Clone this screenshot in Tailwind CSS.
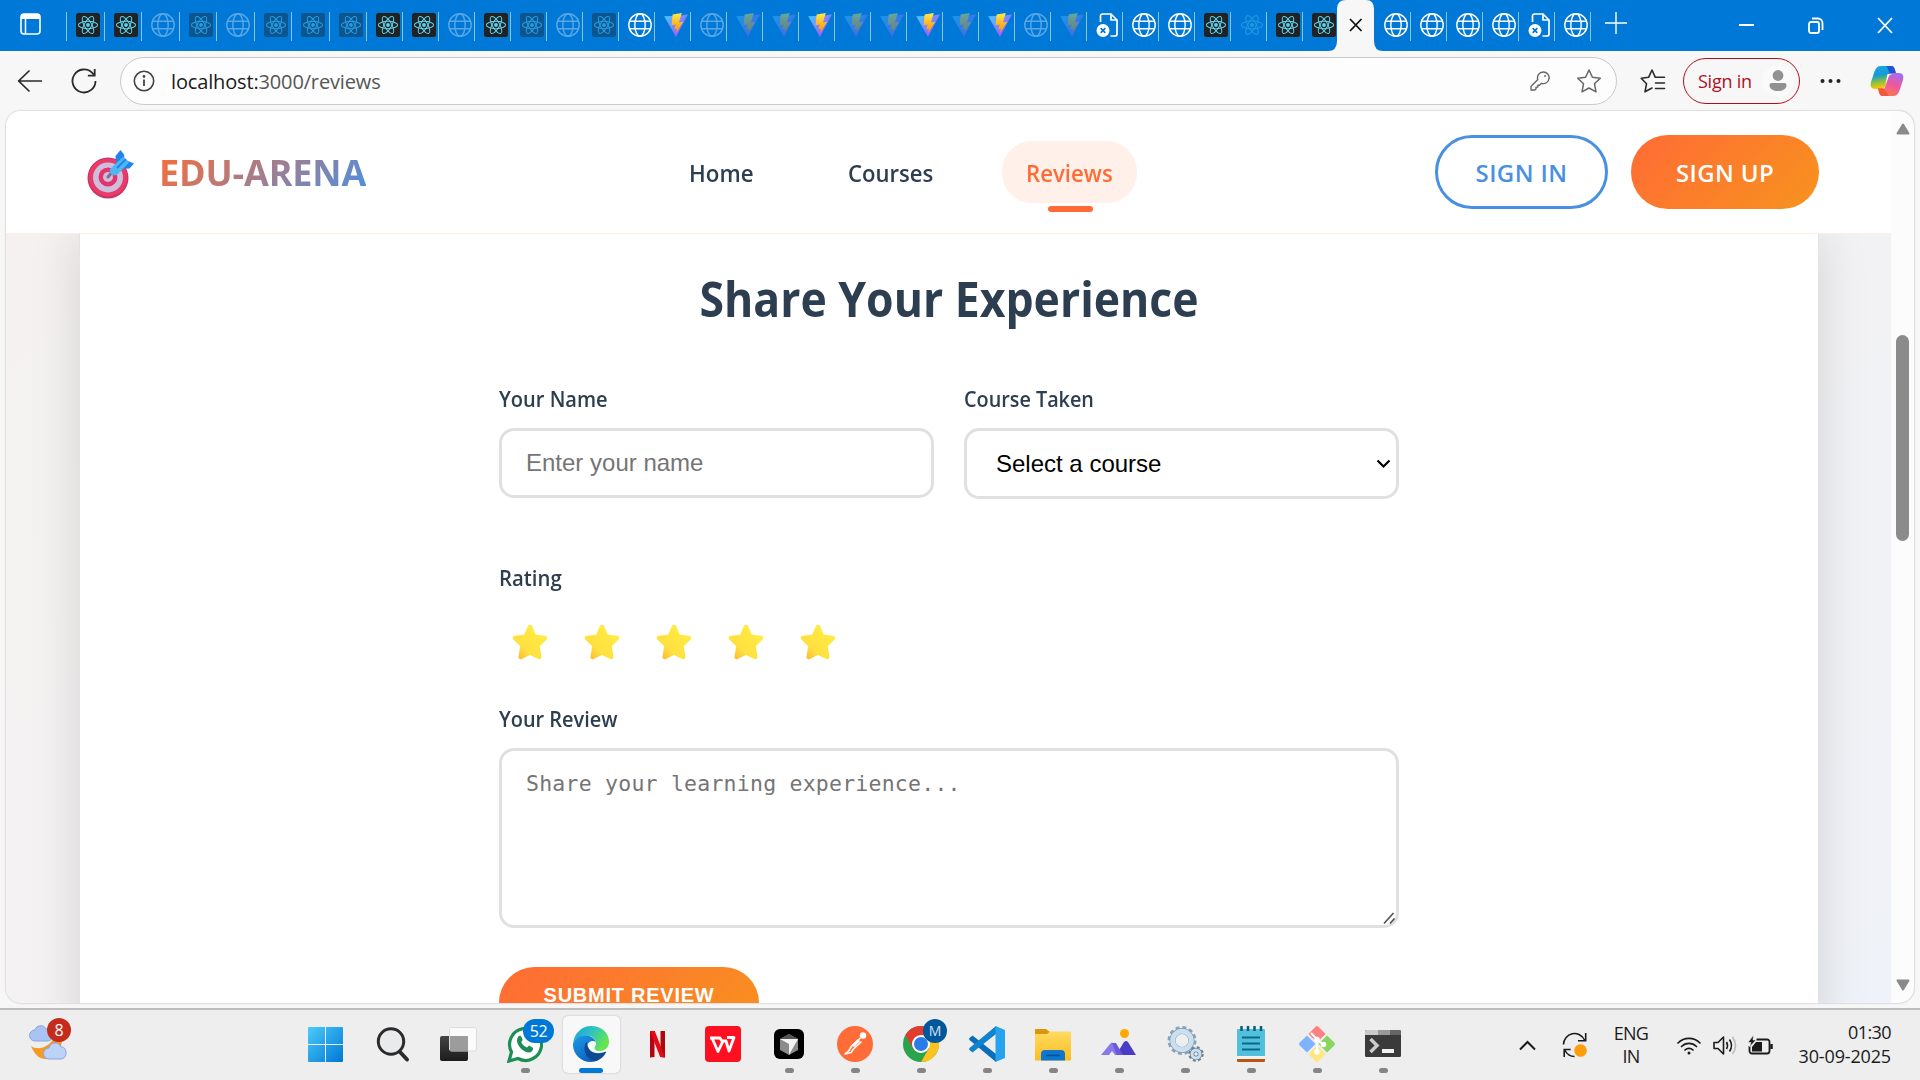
<!DOCTYPE html>
<html lang="en">
<head>
<meta charset="utf-8">
<title>EDU-ARENA – Reviews</title>
<script src="https://cdn.jsdelivr.net/npm/@tailwindcss/browser@4"></script>
</head>
<body class="w-[1920px] h-[1080px] overflow-hidden flex flex-col bg-[#f7f7f7] font-['Open_Sans',sans-serif] text-[#1b1b1b]">

<!-- Shared icon symbols -->
<svg class="absolute w-0 h-0">
  <defs>
    <linearGradient id="viteA" x1="0" y1="0" x2="1" y2="1"><stop offset="0" stop-color="#41d1ff"/><stop offset="1" stop-color="#bd34fe"/></linearGradient>
    <linearGradient id="viteB" x1="0" y1="0" x2="0" y2="1"><stop offset="0" stop-color="#ffea4a"/><stop offset=".6" stop-color="#ffb01a"/><stop offset="1" stop-color="#ff9a00"/></linearGradient>
    <linearGradient id="starG" x1="1" y1="0" x2="0" y2="1"><stop offset="0" stop-color="#ffee45"/><stop offset=".7" stop-color="#ffe03f"/><stop offset="1" stop-color="#fdb63a"/></linearGradient>
  </defs>
  <symbol id="atom" viewBox="0 0 24 24">
    <g fill="none" stroke="#5ed3f0" stroke-width="1.1"><ellipse cx="12" cy="12" rx="10.5" ry="4"/><ellipse cx="12" cy="12" rx="10.5" ry="4" transform="rotate(60 12 12)"/><ellipse cx="12" cy="12" rx="10.5" ry="4" transform="rotate(120 12 12)"/></g>
    <circle cx="12" cy="12" r="2.1" fill="#5ed3f0"/>
  </symbol>
  <symbol id="react" viewBox="0 0 24 24"><rect width="24" height="24" rx="2.5" fill="#222"/><use href="#atom" x="1" y="1" width="22" height="22"/></symbol>
  <symbol id="globe" viewBox="0 0 24 24"><g fill="none" stroke="#fff" stroke-width="1.4"><circle cx="12" cy="12" r="11.2"/><ellipse cx="12" cy="12" rx="5.2" ry="11.2"/><path d="M2 8.2h20M2 15.8h20"/></g></symbol>
  <symbol id="vite" viewBox="0 0 24 24"><path d="M.2 3.2 12 24 24 1.2l-8 1.6Z" fill="url(#viteA)"/><path d="M17.8 0 8.6 1.6 7.6 12.2l4-.8-1.2 5 2.6-.7L12 20.3l7.2-11.5-4.3.8Z" fill="url(#viteB)"/></symbol>
  <symbol id="deadfile" viewBox="0 0 24 24"><path d="M4.500 9V3a2 2 0 0 1 2-2H15l6 6v14a2 2 0 0 1-2 2h-4.500M15 1v6h6" fill="none" stroke="#fff" stroke-width="1.700"/><circle cx="7" cy="17.500" r="6.500" fill="#fff"/><path d="m4.700 15.200 4.600 4.600m0-4.600-4.600 4.600" stroke="#0078d7" stroke-width="1.700"/></symbol>
  <symbol id="star3d" viewBox="0 0 36 36"><path d="M18 3 22.300 12.700 33 14 25.500 21.500 27.300 33 18 28.500 8.700 33 10.500 21.500 3 14 13.700 12.700Z" fill="url(#starG)" stroke="url(#starG)" stroke-width="4.500" stroke-linejoin="round"/></symbol>
</svg>

<!-- Tab strip -->
<div class="h-[51px] shrink-0 bg-[#0078d7] flex items-start">
  <div class="w-[66px] pl-[19.500px] pt-[13px]">
    <svg width="21" height="22" viewBox="0 0 21 22"><rect x="1" y="1" width="19" height="20" rx="3" fill="none" stroke="#fff" stroke-width="1.600"/><path d="M1 1h19v5H1z" fill="#fff"/><path d="M5.500 6v15" stroke="#fff" stroke-width="1.500"/></svg>
  </div>
  <div class="w-px h-[29px] mt-3 bg-[#8cc3ee]"></div>
  <div id="tabs" class="flex items-start"></div>
</div>

<!-- Toolbar -->
<div class="h-[60px] shrink-0 flex items-center">
  <svg class="ml-[17px]" width="26" height="24" viewBox="0 0 26 24" fill="none" stroke="#2a2a2a" stroke-width="1.700"><path d="M25 12H2M12.500 1.500 1.700 12l10.800 10.500"/></svg>
  <svg class="ml-[28px]" width="26" height="26" viewBox="0 0 26 26" fill="none" stroke="#2a2a2a" stroke-width="1.800"><path d="M24.500 13A11.500 11.500 0 1 1 21.500 5.200L23.500 7.500"/><path d="M23.700 1v6.600h-6.800"/></svg>
  <div class="ml-[23px] w-[1497px] h-12 rounded-full border-[1.500px] border-[#c9c9c9] bg-[#fdfdfd] flex items-center">
    <svg class="ml-3 shrink-0" width="22" height="22" viewBox="0 0 22 22" fill="none" stroke="#444" stroke-width="1.600"><circle cx="11" cy="11" r="9.700"/><path d="M11 9.500v6.500" stroke-width="1.800"/><circle cx="11" cy="6.500" r=".6" fill="#444"/></svg>
    <div class="ml-4 w-[1359px] shrink-0 pt-0.5 whitespace-nowrap text-[20px] leading-8 tracking-[-0.15px] text-[#555]"><span class="text-[#1b1b1b]">localhost:</span>3000/reviews</div>
    <svg class="shrink-0" width="20" height="20" viewBox="0 0 20 20" fill="none" stroke="#666" stroke-width="1.400" stroke-linejoin="round"><path d="M13.200 1a5.800 5.800 0 1 1-1.700 11.300L9.500 14.200H7.800v1.900H6v1.800L4.800 19H1v-3.600l6.800-6.800A5.800 5.800 0 0 1 13.200 1Z"/><circle cx="15" cy="5" r=".9" fill="#666" stroke="none"/></svg>
    <svg class="ml-[26px] shrink-0" width="26" height="26" viewBox="0 0 26 26" fill="none" stroke="#666" stroke-width="1.500" stroke-linejoin="round"><path d="m13 2 3.400 7.300 7.900 1-5.800 5.500 1.500 8L13 20l-7 3.800 1.500-8L1.700 10.300l7.900-1Z"/></svg>
  </div>
  <svg class="ml-[23px]" width="26" height="26" viewBox="0 0 26 26" fill="none" stroke="#2a2a2a" stroke-width="1.600" stroke-linejoin="round" stroke-linecap="round"><path d="m12 20-7 3.800 1.500-8-5.300-5.500 7.400-1L12 2l3.300 7.300h9.200M15.500 15h9M15.500 20.500h9"/></svg>
  <div class="ml-[17px] w-[117px] h-[46px] border-[1.500px] border-[#b10e1c] rounded-full flex items-center">
    <span class="ml-[14px] pt-px w-[60px] shrink-0 text-[18px] tracking-[-0.25px] text-[#b10e1c] whitespace-nowrap">Sign in</span>
    <svg class="ml-[4px] shrink-0" width="32" height="34" viewBox="0 0 32 34"><circle cx="16" cy="17" r="16" fill="#fafafa"/><circle cx="16" cy="11.500" r="5.400" fill="#919191"/><path d="M9.500 19h13a2 2 0 0 1 2 2c0 4-4 6-8.500 6s-8.500-2-8.500-6a2 2 0 0 1 2-2Z" fill="#919191"/></svg>
  </div>
  <svg class="ml-5" width="21" height="6" viewBox="0 0 21 6" fill="#222"><circle cx="2.500" cy="3" r="2"/><circle cx="10.500" cy="3" r="2"/><circle cx="18.500" cy="3" r="2"/></svg>
  <svg class="ml-[29px]" width="34" height="32" viewBox="0 0 34 32">
    <defs>
      <linearGradient id="cpA" x1="0" y1="0" x2=".2" y2="1"><stop offset="0" stop-color="#1aa6e8"/><stop offset=".45" stop-color="#159bd6"/><stop offset=".7" stop-color="#7fbf4a"/><stop offset="1" stop-color="#ffc800"/></linearGradient>
      <linearGradient id="cpB" x1=".7" y1="0" x2=".3" y2="1"><stop offset="0" stop-color="#a66bf0"/><stop offset=".5" stop-color="#f0589b"/><stop offset="1" stop-color="#ff7a45"/></linearGradient>
    </defs>
    <path d="M15 1h6c2.500 0 3.300 1.500 4 4l1 3.500h-6L16 20c-1 3-2 4-4.500 4H5C1 24 0 21 1 17L4.500 6.500C5.700 3 7.500 1 11 1Z" fill="url(#cpA)"/>
    <path d="M15 1h6c2.500 0 3.300 1.500 4 4l1 3.500h-6.500L17 1.500Z" fill="#1e55d4"/>
    <path d="M19 31h-6c-2.500 0-3.300-1.500-4-4l-1-3.500h6L18 12c1-3 2-4 4.500-4H29c4 0 5 3 4 7l-3.500 10.500C28.300 29 26.500 31 23 31Z" fill="url(#cpB)"/>
    <path d="M19 31h-6c-2.500 0-3.300-1.500-4-4l-1-3.500h6Z" fill="#f4563a"/>
    <path d="M17.500 9h4.500c-2 .5-3 1.500-3.500 3L14.500 23.500H12c2 0 2.800-1.500 3.300-3Z" fill="#fff"/>
  </svg>
</div>

<!-- Page viewport -->
<div class="h-[897px] shrink-0 px-[6px] pb-[5px]">
  <div class="h-[892px] rounded-[15px] overflow-hidden flex shadow-[0_0_2px_rgba(0,0,0,0.35)] bg-[#fcfcfc]">
    <div class="w-[1885px] flex flex-col bg-[linear-gradient(135deg,#f5f1f1_0%,#f4f2f2_29%,#f2f2f4_71%,#eff2f8_100%)]">
      <!-- Site header -->
      <header class="relative z-10 h-[123px] shrink-0 bg-white border-b border-[#ffede6] flex items-center">
        <svg class="ml-[80px] mt-1" width="50" height="50" viewBox="0 0 50 50">
          <ellipse cx="22" cy="29" rx="20.500" ry="20.500" fill="#c8326b"/><ellipse cx="22" cy="28.500" rx="19.300" ry="19" fill="#e83b68"/>
          <circle cx="22" cy="28.500" r="15" fill="#cdbfdc"/><circle cx="22" cy="28" r="9.500" fill="#e5336b"/><circle cx="22" cy="28" r="5" fill="#cdbfdc"/>
          <path d="m22 28 5-6" stroke="#7d6e94" stroke-width="3" stroke-linecap="round"/>
          <path d="M30 15 29.500 7 34.500 1 38 5.500 38.500 10 42 12 48 14.500 43.500 19.500 35 20Z" fill="#2383ec"/>
          <path d="m24 20 13-12 6 5.500L31 26q-4 1-6-1-2-2.500-1-5Z" fill="#4fb6f2"/><path d="m31 19 9-9" stroke="#2383ec" stroke-width="2"/>
        </svg>
        <div class="ml-[23px] w-[220px] whitespace-nowrap pt-px text-[36px] leading-[50px] font-bold tracking-[-0.15px]"><span class="bg-[linear-gradient(135deg,#ff6b35,#4a90e2)] bg-clip-text text-transparent">EDU-ARENA</span></div>
        <nav class="ml-[310px] flex items-center text-[24px] leading-[64px] font-semibold text-[#2c3e50] whitespace-nowrap">
          <a class="w-[159px] h-[62px]"><span class="inline-block origin-left scale-x-[0.93]">Home</span></a>
          <a class="w-[154px] h-[62px]"><span class="inline-block origin-left scale-x-[0.92]">Courses</span></a>
          <a class="relative w-[135px] h-[62px] rounded-[30px] bg-[#fff0ea] text-[#ff6b35] pl-[24px]"><span class="inline-block origin-left scale-x-[0.925]">Reviews</span><span class="absolute left-[46px] top-[65px] w-[45px] h-[6px] rounded-full bg-[#ff6b35]"></span></a>
        </nav>
        <div class="ml-[298px] flex gap-[23px] text-[24px] font-semibold">
          <a class="w-[173px] h-[74px] pt-0.5 rounded-full border-[3px] border-[#4a90e2] text-[#4a90e2] flex items-center justify-center tracking-[0.4px]">SIGN IN</a>
          <a class="w-[188px] h-[74px] pt-0.5 rounded-full bg-[linear-gradient(135deg,#ff6b35,#f7931e)] text-white flex items-center justify-center tracking-[0.35px]">SIGN UP</a>
        </div>
      </header>
      <!-- Review form card -->
      <main class="flex-1 ml-[73px] w-[1740px] bg-white border-x border-[#e4e2e3] shadow-[0_0_48px_rgba(0,0,0,0.13)] pt-[29px] pl-[419px]">
        <h1 class="w-[900px] text-center text-[48px] leading-[72px] font-bold text-[#2c3e50] scale-x-[0.928]">Share Your Experience</h1>
        <form class="w-[900px] mt-[47px] text-[22px] font-semibold text-[#2c3e50] whitespace-nowrap">
          <div class="flex gap-[30px]">
            <div class="w-[435px]">
              <label class="block leading-[33px] origin-left scale-x-[0.91]">Your Name</label>
              <div class="mt-[13px] h-[70px] border-[3px] border-[#e0e0e0] rounded-[15px] pl-6 font-['Liberation_Sans',sans-serif] font-normal text-[24px] leading-[64px] text-[#757575]">Enter your name</div>
            </div>
            <div class="w-[435px]">
              <label class="block leading-[33px] origin-left scale-x-[0.9]">Course Taken</label>
              <div class="mt-[13px] h-[71px] border-[3px] border-[#e0e0e0] rounded-[15px] pl-[29px] pr-[5px] flex items-center justify-between font-['Liberation_Sans',sans-serif] font-normal text-[24px] text-black">Select a course
                <svg width="15" height="10" viewBox="0 0 15 10" fill="none" stroke="#000" stroke-width="2.200"><path d="m1.500 1.500 6 6 6-6"/></svg>
              </div>
            </div>
          </div>
          <label class="block mt-[62px] leading-[33px] origin-left scale-x-[0.925]">Rating</label>
          <div class="mt-[30px] pl-[13px] flex gap-9">
            <svg width="36" height="36"><use href="#star3d"/></svg>
            <svg width="36" height="36"><use href="#star3d"/></svg>
            <svg width="36" height="36"><use href="#star3d"/></svg>
            <svg width="36" height="36"><use href="#star3d"/></svg>
            <svg width="36" height="36"><use href="#star3d"/></svg>
          </div>
          <label class="block mt-[42px] leading-[33px] origin-left scale-x-[0.905]">Your Review</label>
          <div class="mt-[13px] h-[180px] border-[3px] border-[#e0e0e0] rounded-[15px] pl-6 pt-[17px] flex justify-between items-start font-['DejaVu_Sans_Mono',monospace] font-normal text-[21.500px] leading-[32px] tracking-[0.23px] text-[#757575]">Share your learning experience...
            <svg class="self-end" width="13" height="13" viewBox="0 0 13 13" stroke="#555" stroke-width="1.700"><path d="M1 11.500 10.500 1M7 11.500l4.500-5" /></svg>
          </div>
          <div class="mt-[39px] w-[260px] h-[71px] rounded-full bg-[linear-gradient(135deg,#ff6b35,#f7931e)] font-['Liberation_Sans',sans-serif] font-bold text-[20px] leading-[56px] tracking-[0.75px] text-white text-center">SUBMIT REVIEW</div>
        </form>
      </main>
    </div>
    <!-- Scrollbar -->
    <div class="flex-1 flex flex-col items-center pt-3 pb-3">
      <svg width="14" height="12" viewBox="0 0 14 12"><path d="M7 1.500 12.500 10.500h-11Z" fill="#8a8a8a" stroke="#8a8a8a" stroke-width="2" stroke-linejoin="round"/></svg>
      <div class="mt-[200px] w-[13px] h-[206px] rounded-full bg-[#8b8b8b]"></div>
      <svg class="mt-auto" width="14" height="12" viewBox="0 0 14 12"><path d="M7 10.500 12.500 1.500h-11Z" fill="#8a8a8a" stroke="#8a8a8a" stroke-width="2" stroke-linejoin="round"/></svg>
    </div>
  </div>
</div>

<!-- Taskbar -->
<div class="h-[72px] shrink-0 border-t-2 border-[#bdbdbd] bg-[#eeeeee] flex items-start">
  <div class="relative w-[292px] pl-[27px] pt-2">
    <svg width="44" height="44" viewBox="0 0 44 44">
      <path d="M35 15c2 14-6 26-16 26-7 0-11-4-15-13 4 3 10 3 15 0 7-4 9-9 9-15Z" fill="#f59a24"/>
      <path d="M8 23a5.500 5.500 0 0 1 0-11c1-5 9-6 11-1 4 0 7 3 7 6s-2 6-6 6Z" fill="#a9c4f3" stroke="#86a5df"/>
      <path d="M22 41a5.500 5.500 0 0 1 0-11c1-6 10-7 12-1 4 0 5 3 5 6s-2 6-5 6Z" fill="#bcd2f7" stroke="#86a5df"/>
    </svg>
    <span class="absolute left-[47px] top-2 w-6 h-6 rounded-full bg-[#c42b1c] text-white text-[16px] leading-6 text-center">8</span>
  </div>
  <div class="flex">
    <!-- Start -->
    <div class="w-[66px] pt-[17px] flex flex-col items-center"><svg width="35" height="35" viewBox="0 0 35 35"><defs><linearGradient id="win" gradientUnits="userSpaceOnUse" x1="0" y1="0" x2="35" y2="35"><stop offset="0" stop-color="#4bcbfb"/><stop offset="1" stop-color="#0078d4"/></linearGradient></defs><path d="M1 0h16v17H0V1a1 1 0 0 1 1-1ZM18 0h16a1 1 0 0 1 1 1v16H18ZM0 18h17v17H1a1 1 0 0 1-1-1ZM18 18h17v16a1 1 0 0 1-1 1H18Z" fill="url(#win)"/></svg></div>
    <!-- Search -->
    <div class="w-[68px] pt-[17px] pl-0.5 flex flex-col items-center"><svg width="34" height="36" viewBox="0 0 34 36"><circle cx="15" cy="14.500" r="12.700" fill="#e9eaec" stroke="#2b2b2b" stroke-width="3"/><path d="m24 25 7 7.500" stroke="#2b2b2b" stroke-width="4" stroke-linecap="round"/></svg></div>
    <!-- Task view -->
    <div class="w-[66px] pt-[17px] pr-0.5 flex flex-col items-center"><svg width="37" height="35" viewBox="0 0 37 35"><defs><linearGradient id="tv" x1="0" y1="0" x2="0" y2="1"><stop offset="0" stop-color="#444"/><stop offset="1" stop-color="#1c1c1c"/></linearGradient></defs><rect x="0" y="9" width="28" height="25" rx="2" fill="url(#tv)"/><rect x="9.500" y=".5" width="27" height="23.500" rx="2" fill="#fff" fill-opacity=".75" stroke="#dcdcdc"/><path d="M10 9h18v15H10Z" fill="#9c9c9c"/></svg></div>
    <!-- WhatsApp -->
    <div class="relative w-[66px] pt-4 flex flex-col items-center"><svg width="36" height="37" viewBox="0 0 36 37"><path d="M2 35 4.500 26A16 16 0 1 1 11 32.500Z" fill="#fff" stroke="#1d8f56" stroke-width="3.200"/><path d="M11 11c1-2 3-1.500 3.500 0l1.200 3-1.500 2c1 2.500 3 4.500 5.800 5.600l2-2 3.500 1.800c1.500 1 0 4-2.500 5-5 1-13-6-13-12 0-1 .5-2.500 1-3.400Z" fill="#1d8f56"/></svg>
      <span class="mt-[5px] w-[9px] h-[5px] rounded-full bg-[#858585]"></span>
      <span class="absolute left-[31px] top-[9px] w-[31px] h-[24px] rounded-full bg-[#0078d7] text-white text-[16px] leading-[24px] tracking-[-0.5px] text-center">52</span></div>
    <!-- Edge -->
    <div class="w-[66px] pt-[6px] flex flex-col items-center"><div class="w-[57px] h-[57px] rounded-[5px] bg-[#f8f8f8] shadow-[0_0_2px_rgba(0,0,0,0.25)] flex flex-col items-center pt-[10px]">
      <svg width="36" height="36" viewBox="0 0 36 36"><defs><linearGradient id="eg1" x1="0" y1="0" x2="1" y2=".5"><stop offset="0" stop-color="#1b9de2"/><stop offset=".5" stop-color="#2cc3c0"/><stop offset="1" stop-color="#66e64e"/></linearGradient><linearGradient id="eg2" x1="0" y1="0" x2=".6" y2="1"><stop offset="0" stop-color="#1f9be8"/><stop offset="1" stop-color="#0b62c0"/></linearGradient></defs>
        <path d="M0 18C1 7 9 0 18 0c11 0 18 7.500 18 15.500 0 6-4 9.500-9 9.500-4 0-5.500-1.500-5.500-3 0-1.200 1.500-2 1.500-4.500C23 13 19 9.500 13 9.500 7 9.500 2 12.500 0 18Z" fill="url(#eg1)"/>
        <path d="M0 18C2 12 7 9 13 9.200c5 .2 9 3.500 10 7.300-3-3-9-1-9 5 0 7 5 12.500 11 12.500-2 1.300-4.500 2-7 2C7 36-.5 27 0 18Z" fill="url(#eg2)"/>
        <path d="M14 15.500c-1.500 1.500-2.500 3.500-2.500 6.500 0 7 5 13 12 13 4-1.500 7.500-4.500 9.500-8.500.3-.8-.5-1-1-.7-8 3.500-18 1-18-10.300Z" fill="#0d4a92"/></svg>
      <span class="mt-[6px] w-6 h-[5px] rounded-full bg-[#0078d7]"></span></div></div>
    <!-- Netflix -->
    <div class="w-[66px] pt-[21px] flex flex-col items-center"><svg width="15" height="27" viewBox="0 0 15 27"><path d="M0 0h4.500v26L0 26.500ZM10.500 0H15v26.500l-4.500-.5Z" fill="#b1060f"/><path d="M0 0h4.800L15 26.500l-4.800-.5Z" fill="#e50914"/></svg></div>
    <!-- WPS -->
    <div class="w-[66px] pt-4 flex flex-col items-center"><svg width="36" height="36" viewBox="0 0 36 36"><rect width="36" height="36" rx="4" fill="#ff1020"/><path d="M5 12h10l2.500 4M7 12l6 13.500 5-10.500h3l3 10 5-13.500h-7" fill="none" stroke="#fff" stroke-width="2.800" stroke-linejoin="round"/></svg></div>
    <!-- Cursor -->
    <div class="w-[66px] pt-[19px] flex flex-col items-center"><svg width="30" height="30" viewBox="0 0 30 30"><rect width="30" height="30" rx="6" fill="#000"/><path d="m15 5 9 5v11l-9 5-9-5V10Z" fill="#8b8b8b"/><path d="m15 5 9 5H6Z" fill="#555"/><path d="M6 10h18l-9 16V15Z" fill="#f4f4f4"/></svg><span class="mt-[9px] w-[9px] h-[5px] rounded-full bg-[#858585]"></span></div>
    <!-- Postman -->
    <div class="w-[66px] pt-4 flex flex-col items-center"><svg width="36" height="36" viewBox="0 0 36 36"><circle cx="18" cy="18" r="18" fill="#ff6c37"/><circle cx="26" cy="9.500" r="3.200" fill="#fff"/><path d="M23.500 12 15 19.500l-3 5-4 3.500 6-1.500 2.500-3.500 8-7.500" fill="none" stroke="#fff" stroke-width="1.600" stroke-linejoin="round"/><path d="m22 14-6 6" stroke="#fff" stroke-width="3"/></svg><span class="mt-[6px] w-[9px] h-[5px] rounded-full bg-[#858585]"></span></div>
    <!-- Chrome -->
    <div class="relative w-[66px] pt-4 flex flex-col items-center"><svg width="36" height="36" viewBox="0 0 36 36"><circle cx="18" cy="18" r="18" fill="#2ba24c"/><path d="M2.400 9A18 18 0 0 1 33.600 9H18L10.200 22.500Z" fill="#e33b2e"/><path d="M33.600 9A18 18 0 0 1 18 36l7.800-13.500L18 9Z" fill="#fcc31e"/><circle cx="18" cy="18" r="9" fill="#fff"/><circle cx="18" cy="18" r="7" fill="#2a7de9"/></svg><span class="mt-[6px] w-[9px] h-[5px] rounded-full bg-[#858585]"></span>
      <span class="absolute left-[35px] top-[9px] w-6 h-6 rounded-full bg-[#01579b] text-[#d5e4f2] text-[14px] leading-6 text-center">M</span></div>
    <!-- VS Code -->
    <div class="w-[66px] pt-4 flex flex-col items-center"><svg width="36" height="36" viewBox="0 0 36 36"><path d="M0 12.500 3.500 9.500 27 28v8L.5 14Z" fill="#0a6fb8"/><path d="M0 23.500 3.500 26.500 27 8V0L.5 22Z" fill="#0f83cd"/><path d="M26.500 0 36 4v28l-9.500 4Z" fill="#27a2ee"/></svg><span class="mt-[6px] w-[9px] h-[5px] rounded-full bg-[#858585]"></span></div>
    <!-- Explorer -->
    <div class="w-[66px] pt-[18px] flex flex-col items-center"><svg width="36" height="33" viewBox="0 0 36 33"><defs><linearGradient id="fo" x1="0" y1="0" x2="0" y2="1"><stop offset="0" stop-color="#ffda63"/><stop offset="1" stop-color="#fbbd1c"/></linearGradient></defs><path d="M0 1h11l4 3v6H0Z" fill="#d9970c"/><path d="M0 6h12l3-2.500h21V32.500H0Z" fill="url(#fo)"/><path d="M6 32.500V26a4 4 0 0 1 4-4h16a4 4 0 0 1 4 4v6.500Z" fill="#0f76d0"/><path d="M11 27.500h14" stroke="#0a4f94" stroke-width="1.600"/></svg><span class="mt-[7px] w-[9px] h-[5px] rounded-full bg-[#858585]"></span></div>
    <!-- Mountain and sun app -->
    <div class="w-[66px] pt-[19px] flex flex-col items-center"><svg width="36" height="28" viewBox="0 0 36 28"><circle cx="23.500" cy="4.500" r="4.500" fill="#ffa800"/><path d="M15 26 23 13q2-2 4 0l8 13H22Z" fill="#4a3cc4"/><path d="M0 26 9 15q2-3 4 0l3 4 6 7h-8l-3-4-3 4Z" fill="#8878ea"/><path d="M11 14h4l7 12h-6Z" fill="#6a58dc"/></svg><span class="mt-[11px] w-[9px] h-[5px] rounded-full bg-[#858585]"></span></div>
    <!-- Settings gears -->
    <div class="w-[66px] pt-4 flex flex-col items-center"><svg width="38" height="36" viewBox="0 0 38 36"><g fill="none"><circle cx="16" cy="14.500" r="12.500" stroke="#8da3b6" stroke-width="4" stroke-dasharray="3.800 2.740"/><circle cx="16" cy="14.500" r="9.500" stroke="#7d93a6" stroke-width="6"/><circle cx="16" cy="14.500" r="9.300" stroke="#c9e0f2" stroke-width="5"/><circle cx="30" cy="28" r="6" stroke="#6d8294" stroke-width="3.500" stroke-dasharray="2.600 2.110"/><circle cx="30" cy="28" r="4" stroke="#6d8294" stroke-width="4.500"/><circle cx="30" cy="28" r="4" stroke="#c9e0f2" stroke-width="3"/></g></svg><span class="mt-[6px] w-[9px] h-[5px] rounded-full bg-[#858585]"></span></div>
    <!-- Notepad -->
    <div class="w-[66px] pt-4 flex flex-col items-center"><svg width="28" height="36" viewBox="0 0 28 36"><path d="M0 32h28v3a1 1 0 0 1-1 1H1a1 1 0 0 1-1-1Z" fill="#b9560f"/><path d="M0 29h28v4H0Z" fill="#f3f3f3"/><path d="M1 3h26a1 1 0 0 1 1 1v26H0V4a1 1 0 0 1 1-1Z" fill="#50c0dc"/><path d="M5 11.500h18M5 17.500h18M5 23.500h18" stroke="#0e6787" stroke-width="2"/><path d="M4.500 0v5M11 0v5M17.500 0v5M24 0v5" stroke="#0e5a78" stroke-width="2.500"/></svg><span class="mt-[6px] w-[9px] h-[5px] rounded-full bg-[#858585]"></span></div>
    <!-- Git Bash -->
    <div class="w-[66px] pt-4 flex flex-col items-center"><svg width="36" height="36" viewBox="0 0 36 36"><g><path d="M16.500.7q1.500-1.200 3 0L26.500 8 18 16.500 9.500 8Z" fill="#ff8080"/><path d="M.7 16.500 8 9.500 16.500 18 8 26.500.7 19.500q-1.200-1.500 0-3Z" fill="#80b3ff"/><path d="M35.300 16.500 28 9.500 19.500 18l8.500 8.500 7.300-7q1.200-1.500 0-3Z" fill="#87d75f"/><path d="M16.500 35.300q1.500 1.200 3 0l7-7.300L18 19.500 9.500 28Z" fill="#ffe680"/></g><path d="m12 7 6 6.500v13M18 13.500l6 5" stroke="#fff" stroke-width="2.200" fill="none"/><circle cx="18" cy="13.500" r="2.800" fill="#fff"/><circle cx="24.500" cy="18.500" r="2.800" fill="#fff"/><circle cx="18" cy="26" r="2.800" fill="#fff"/></svg><span class="mt-[6px] w-[9px] h-[5px] rounded-full bg-[#858585]"></span></div>
    <!-- Terminal -->
    <div class="w-[66px] pt-5 flex flex-col items-center"><svg width="36" height="27" viewBox="0 0 36 27"><rect width="36" height="27" rx="1.500" fill="#3a3a3a"/><path d="M0 5V1.500A1.500 1.500 0 0 1 1.500 0H13v5Z" fill="#c9c9c9"/><path d="M13 0h12v5H13Z" fill="#999"/><path d="M25 0h9.500A1.500 1.500 0 0 1 36 1.500V5H25Z" fill="#666"/><path d="m5.500 9 6.500 6.500L5.500 22" fill="none" stroke="#ccc" stroke-width="3.500"/><path d="M17 19h12v4H17Z" fill="#f2f2f2"/></svg><span class="mt-[11px] w-[9px] h-[5px] rounded-full bg-[#858585]"></span></div>
  </div>
  <!-- System tray -->
  <div class="ml-auto h-[70px] flex items-center pr-[29px] text-[18px] leading-6 whitespace-nowrap">
    <svg width="17" height="11" viewBox="0 0 17 11" fill="none" stroke="#1b1b1b" stroke-width="2"><path d="m1 9.500 7.500-7.500 7.500 7.500"/></svg>
    <svg class="ml-[26px]" width="27" height="26" viewBox="0 0 27 26" fill="none" stroke="#1b1b1b" stroke-width="1.600"><path d="M1.500 12.500a11 11 0 0 1 21-4.500M23.700 1v7.700H16M12.500 24.500a11 11 0 0 1-9.500-6M2.200 25v-7.500h6.500"/><circle cx="18.500" cy="18.500" r="6.300" fill="#ff9c0a" stroke="none"/></svg>
    <div class="ml-[22px] w-[40px] text-center text-[18px] leading-[23px] tracking-[-0.7px] pb-[1px]">ENG<br>IN</div>
    <svg class="ml-[26px]" width="24" height="19" viewBox="0 0 24 19" fill="none" stroke="#1b1b1b" stroke-width="1.700" stroke-linecap="round"><path d="M1 7a15.500 15.500 0 0 1 22 0M4.500 10.500a10.600 10.600 0 0 1 15 0M8 14a5.700 5.700 0 0 1 8 0"/><circle cx="12" cy="17" r="1.500" fill="#1b1b1b" stroke="none"/></svg>
    <svg class="ml-3" width="25" height="21" viewBox="0 0 25 21" fill="none" stroke="#1b1b1b" stroke-width="1.600" stroke-linejoin="round"><path d="M1 7.500h4L10.500 2v17L5 13.500H1Z"/><path d="M13.500 7q2 3.500 0 7M16.500 4.500q4 6 0 12"/><path d="M19.500 2q6 8.500 0 17" stroke="#bbb"/></svg>
    <svg class="ml-[10px]" width="25" height="21" viewBox="0 0 25 21" fill="none" stroke="#1b1b1b" stroke-width="1.800"><path d="M8.500 4.500H19a2.500 2.500 0 0 1 2.500 2.500v9a2.500 2.500 0 0 1-2.500 2.500H4A2.500 2.500 0 0 1 1.500 16v-5"/><path d="M23.500 9v5" stroke-width="2.500"/><path d="M4 16.500V12l4-5h6v9.500Z" fill="#1b1b1b" stroke="none"/><path d="M5.500 0 0 7.500h3L1.500 12 8 5H5Z" fill="#1b1b1b" stroke="#eee" stroke-width=".6"/></svg>
    <div class="ml-[24px] w-[94px] text-right leading-[24.500px] tracking-[-0.15px] pb-[2px]"><span class="tracking-[-0.6px]">01:30</span><br>30-09-2025</div>
  </div>
</div>

<script>
  // Tab codes: R react, G globe, V vite, F missing file, A bare atom; lower case = sleeping tab; X = active tab
  const order = 'R R g r g r r r R R g R r g r G V g v v V v v V v V g v F G G R a R R X G G G G F G'.split(' ');
  const icon = { R: 'react', G: 'globe', V: 'vite', F: 'deadfile', A: 'atom' };
  const fade = { r: 'opacity-40', g: 'opacity-35', v: 'opacity-40', a: 'opacity-35' };
  document.getElementById('tabs').innerHTML = order.map((code, i) => {
    if (code === 'X') return `<div class="relative w-[36px] h-[51px]"><svg class="absolute left-[-11px] top-0" width="58" height="51" viewBox="0 0 58 51"><path d="M0 51q9 0 9-10V9Q9 0 18 0H38Q46 0 46 9V41q0 10 9 10Z" fill="#f7f7f7"/><path d="m22 19 11.500 12M33.500 19 22 31" stroke="#111" stroke-width="1.800"/></svg></div>`;
    const last = order[i + 1] === 'X';
    return `<div class="${i < 8 ? 'w-[37.5px]' : 'w-[36px]'} flex justify-between pt-3 pl-[9px]">
      <svg class="mt-px shrink-0 ${fade[code] || 'opacity-100'}" width="24" height="24"><use href="#${icon[code.toUpperCase()]}"/></svg>
      ${last ? '' : '<span class="w-px h-[29px] bg-[#8cc3ee]"></span>'}</div>`;
  }).join('') + `<svg class="ml-[14px] mt-[12px]" width="22" height="22" viewBox="0 0 22 22" stroke="#fff" stroke-width="1.4"><path d="M11 0v22M0 11h22"/></svg>
    <svg class="ml-[112px] mt-[24px]" width="15" height="2" viewBox="0 0 15 2"><path d="M0 1h15" stroke="#fff" stroke-width="2"/></svg>
    <svg class="ml-[54px] mt-[17px]" width="16" height="17" viewBox="0 0 16 17" fill="none" stroke="#fff" stroke-width="1.8"><rect x="1" y="5" width="10" height="11" rx="2"/><path d="M4 1.500h6a4.500 4.500 0 0 1 4.500 4.500v7"/></svg>
    <svg class="ml-[53px] mt-[17px]" width="16" height="17" viewBox="0 0 16 17" stroke="#fff" stroke-width="1.8"><path d="m1 1 14 15M15 1 1 16"/></svg>`;
</script>
</body>
</html>
